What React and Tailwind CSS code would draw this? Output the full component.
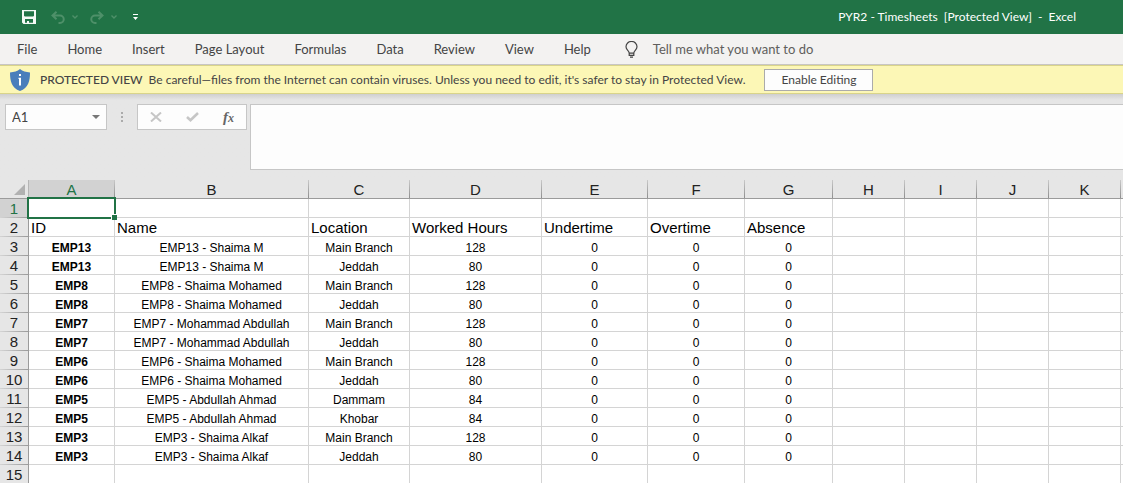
import React from "react";

const TABS = ["File", "Home", "Insert", "Page Layout", "Formulas", "Data", "Review", "View", "Help"];
const COLUMNS = ["A", "B", "C", "D", "E", "F", "G", "H", "I", "J", "K", ""];
const COLUMN_WIDTHS = [
  "w-[86px]", "w-[194px]", "w-[101px]", "w-[132px]", "w-[106px]", "w-[97px]",
  "w-[88px]", "w-[72px]", "w-[72px]", "w-[72px]", "w-[72px]", "",
];
const ROWS = [
  [],
  ["ID", "Name", "Location", "Worked Hours", "Undertime", "Overtime", "Absence"],
  ["EMP13", "EMP13 - Shaima M", "Main Branch", "128", "0", "0", "0"],
  ["EMP13", "EMP13 - Shaima M", "Jeddah", "80", "0", "0", "0"],
  ["EMP8", "EMP8 - Shaima Mohamed", "Main Branch", "128", "0", "0", "0"],
  ["EMP8", "EMP8 - Shaima Mohamed", "Jeddah", "80", "0", "0", "0"],
  ["EMP7", "EMP7 - Mohammad Abdullah", "Main Branch", "128", "0", "0", "0"],
  ["EMP7", "EMP7 - Mohammad Abdullah", "Jeddah", "80", "0", "0", "0"],
  ["EMP6", "EMP6 - Shaima Mohamed", "Main Branch", "128", "0", "0", "0"],
  ["EMP6", "EMP6 - Shaima Mohamed", "Jeddah", "80", "0", "0", "0"],
  ["EMP5", "EMP5 - Abdullah Ahmad", "Dammam", "84", "0", "0", "0"],
  ["EMP5", "EMP5 - Abdullah Ahmad", "Khobar", "84", "0", "0", "0"],
  ["EMP3", "EMP3 - Shaima Alkaf", "Main Branch", "128", "0", "0", "0"],
  ["EMP3", "EMP3 - Shaima Alkaf", "Jeddah", "80", "0", "0", "0"],
  [],
];

function Chevron() {
  return (
    <svg width="6" height="4" viewBox="0 0 6 4" fill="none" stroke="#4e9069" strokeWidth="1.4">
      <path d="M0.5 0.5 3 3 5.5 0.5" />
    </svg>
  );
}

function TitleBar() {
  return (
    <header className="flex h-[34px] shrink-0 items-center justify-between bg-[#217346] pl-[22px] pr-[47px]">
      <div className="flex items-center">
        <button type="button" aria-label="Save" className="mr-[15px]">
          <svg className="block" width="14" height="14" viewBox="0 0 14 14" fill="#f5f9f6" fillRule="evenodd">
            <path d="M0 0H14V14H1.5L0 12.5ZM2 1.3V5.8L2.8 6.5H11.2L12 5.8V1.3ZM3 9V12.7H5V11H7V12.7H11V9Z" />
          </svg>
        </button>
        <button type="button" aria-label="Undo" className="mr-[7px]">
          <svg className="block" width="14" height="13" viewBox="0 0 14 13" fill="none" stroke="#4e9069" strokeWidth="2">
            <path d="M5.5 0.7 1.5 4.5 5.5 8.3M1.8 4.5H9A3.7 3.7 0 0 1 9 12H7.5" />
          </svg>
        </button>
        <button type="button" aria-label="Undo history" className="mr-3"><Chevron /></button>
        <button type="button" aria-label="Redo" className="mr-[7px]">
          <svg className="block" width="14" height="13" viewBox="0 0 14 13" fill="none" stroke="#4e9069" strokeWidth="2">
            <path d="M8.5 0.7 12.5 4.5 8.5 8.3M12.2 4.5H5A3.7 3.7 0 0 0 5 12H6.5" />
          </svg>
        </button>
        <button type="button" aria-label="Redo history" className="mr-4"><Chevron /></button>
        <button type="button" aria-label="Customize Quick Access Toolbar">
          <svg className="block" width="5" height="6" viewBox="0 0 5 6" fill="#fff">
            <path d="M0 0H5V1H0ZM0 3H5L2.5 6Z" />
          </svg>
        </button>
      </div>
      <h1 className="whitespace-pre text-[12px] leading-4 text-white">PYR2 - Timesheets  [Protected View]  -  Excel</h1>
    </header>
  );
}

function Ribbon() {
  return (
    <nav className="flex h-[31px] shrink-0 items-center border-b border-[#c8c6c4] bg-[#f3f2f1] pl-[17px] text-[#444]">
      <div className="flex gap-[30px]">
        {TABS.map((tab) => (
          <button key={tab} type="button" className="whitespace-nowrap text-[13px] leading-4">{tab}</button>
        ))}
      </div>
      <svg className="ml-[34px] block" width="13" height="17" viewBox="0 0 13 17" fill="none" stroke="#444" strokeWidth="1.2">
        <path d="M4.2 12.2C4.2 9.8 1 8.8 1 5.8A5.3 5.2 0 0 1 12 5.8C12 8.8 8.8 9.8 8.8 12.2ZM4.2 12V14.3H8.8V12M5 16.2H8" />
      </svg>
      <button type="button" className="ml-[15px] whitespace-nowrap text-[13px] leading-4 text-[#605e5c]">
        Tell me what you want to do
      </button>
    </nav>
  );
}

function ProtectedBar() {
  return (
    <section className="flex h-[29px] shrink-0 items-center border-y border-[#d9d48a] bg-[#fcf7b6] pl-[10px] text-[12px] leading-4 text-[#444]">
      <svg className="block shrink-0" width="20" height="22" viewBox="0 0 20 22">
        <path d="M10 0C7.5 2.2 4 3.2 0 3.4C0 12 1.5 18.5 10 22C18.5 18.5 20 12 20 3.4C16 3.2 12.5 2.2 10 0Z" fill="#4a7ebb" />
        <path d="M9 5H11V7H9ZM8.5 8.7H11V16.5H9V10H8.5Z" fill="#fff" />
      </svg>
      <strong className="ml-[10px] whitespace-nowrap font-medium">PROTECTED VIEW</strong>
      <p className="ml-[6px] whitespace-nowrap">
        Be careful—files from the Internet can contain viruses. Unless you need to edit, it's safer to stay in Protected View.
      </p>
      <button type="button" className="ml-[19px] h-[22px] w-[109px] whitespace-nowrap border border-[#ababab] bg-[#fdfdfd]">
        Enable Editing
      </button>
    </section>
  );
}

function FormulaBar() {
  return (
    <section className="flex shrink-0 items-start bg-[#e6e6e6] bg-linear-to-b from-[#cfcfcf] to-[#e6e6e6] to-[6px] pb-[10px] pl-[5px] pt-[10px]">
      <div className="flex h-[26px] w-[102px] items-center border border-[#c6c6c6] bg-[#fdfdfd] pl-[6px] pr-[6px]">
        <input aria-label="Name Box" defaultValue="A1" className="w-full min-w-0 bg-transparent text-[13px] leading-4 text-[#444] outline-none" />
        <button type="button" aria-label="Named ranges">
          <svg className="block" width="8" height="4" viewBox="0 0 8 4" fill="#777"><path d="M0 0H8L4 4Z" /></svg>
        </button>
      </div>
      <svg className="ml-[14px] mt-2 block" width="2" height="10" viewBox="0 0 2 10" fill="#ababab">
        <path d="M0 0H2V2H0ZM0 4H2V6H0ZM0 8H2V10H0Z" />
      </svg>
      <div className="ml-[14px] flex h-[26px] w-[110px] items-center border border-[#c6c6c6] bg-[#fdfdfd] pl-3">
        <button type="button" aria-label="Cancel">
          <svg className="block" width="12" height="10" viewBox="0 0 12 10" fill="none" stroke="#c6c6c6" strokeWidth="2">
            <path d="M1 0.5 11 9.5M11 0.5 1 9.5" />
          </svg>
        </button>
        <button type="button" aria-label="Enter" className="ml-6">
          <svg className="block" width="13" height="10" viewBox="0 0 13 10" fill="none" stroke="#c6c6c6" strokeWidth="2.6">
            <path d="M1 5 4.5 8.2 12 1" />
          </svg>
        </button>
        <button type="button" aria-label="Insert Function" className="ml-6 font-['Liberation_Serif',serif] text-[15px] font-bold italic leading-4 text-[#666]">
          f<span className="text-[12px]">x</span>
        </button>
      </div>
      <textarea aria-label="Formula Bar" className="ml-[3px] block h-[66px] min-w-0 flex-1 resize-none border border-r-0 border-[#c6c6c6] bg-[#fdfdfd] outline-none" />
    </section>
  );
}

function cellStyle(row, col) {
  if (row === 1) return "pl-[2px] pt-[2px] text-left text-[15px] leading-4";
  if (col === 0) return "pt-1 text-center text-[12px] font-bold leading-[14px]";
  return "pt-1 text-center text-[12px] leading-[14px]";
}

function Sheet() {
  return (
    <table className="w-full table-fixed border-separate border-spacing-0 font-['Liberation_Sans',Arial,sans-serif] text-black">
      <colgroup>
        <col className="w-[29px]" />
        {COLUMN_WIDTHS.map((w, i) => <col key={i} className={w} />)}
      </colgroup>
      <thead>
        <tr className="h-[19px] bg-[#e6e6e6]">
          <td className="border-b border-r border-b-[#9b9b9b] border-r-[#b5b5b5] p-0">
            <svg className="ml-[14px] block" width="11" height="11" viewBox="0 0 11 11"><path d="M11 0V11H0Z" fill="#b1b1b1" /></svg>
          </td>
          {COLUMNS.map((c, i) => (
            <th
              key={i}
              scope="col"
              className={
                "border-b border-b-[#9b9b9b] bg-linear-to-b from-[#c9c9c9] to-[#8f8f8f] p-0 text-[15px] font-normal leading-4 " +
                (i === 0 ? "text-[#217346]" : "text-[#222]")
              }
            >
              <div className={"h-[18px] overflow-hidden pt-[2px] " + (i === 0 ? "mr-px bg-[#d2d2d2]" : i === 11 ? "bg-[#e6e6e6]" : "mr-px bg-[#e6e6e6]")}>{c}</div>
            </th>
          ))}
        </tr>
      </thead>
      <tbody>
        {ROWS.map((cells, r) => (
          <tr key={r} className="h-[19px]">
            <th
              scope="row"
              className={
                "border-r border-r-[#9b9b9b] bg-linear-to-r from-[#d4d4d4] to-[#9b9b9b] p-0 text-[15px] font-normal leading-4 " +
                (r === 0 ? "text-[#217346]" : "text-[#222]")
              }
            >
              <div className={"mb-px h-[18px] overflow-hidden pt-[2px] " + (r === 0 ? "bg-[#d2d2d2]" : "bg-[#e6e6e6]")}>{r + 1}</div>
            </th>
            {COLUMNS.map((c, i) => (
              <td
                key={i}
                className={"relative whitespace-nowrap border-b border-r border-[#d4d4d4] px-0 pb-0 last:border-r-0 " + cellStyle(r, i)}
              >
                {cells[i]}
                {r === 0 && i === 0 && (
                  <>
                    <span className="absolute -inset-[2px] z-10 border-2 border-[#217346]" />
                    <span className="absolute -bottom-[3px] -right-[3px] z-20 h-[6px] w-[6px] border-l border-t border-white bg-[#217346]" />
                  </>
                )}
              </td>
            ))}
          </tr>
        ))}
      </tbody>
    </table>
  );
}

export default function App() {
  return (
    <div className="flex h-screen flex-col overflow-hidden bg-white font-['Lato','Noto_Sans',sans-serif]">
      <TitleBar />
      <Ribbon />
      <ProtectedBar />
      <FormulaBar />
      <main className="min-h-0 flex-1 overflow-hidden">
        <Sheet />
      </main>
    </div>
  );
}
